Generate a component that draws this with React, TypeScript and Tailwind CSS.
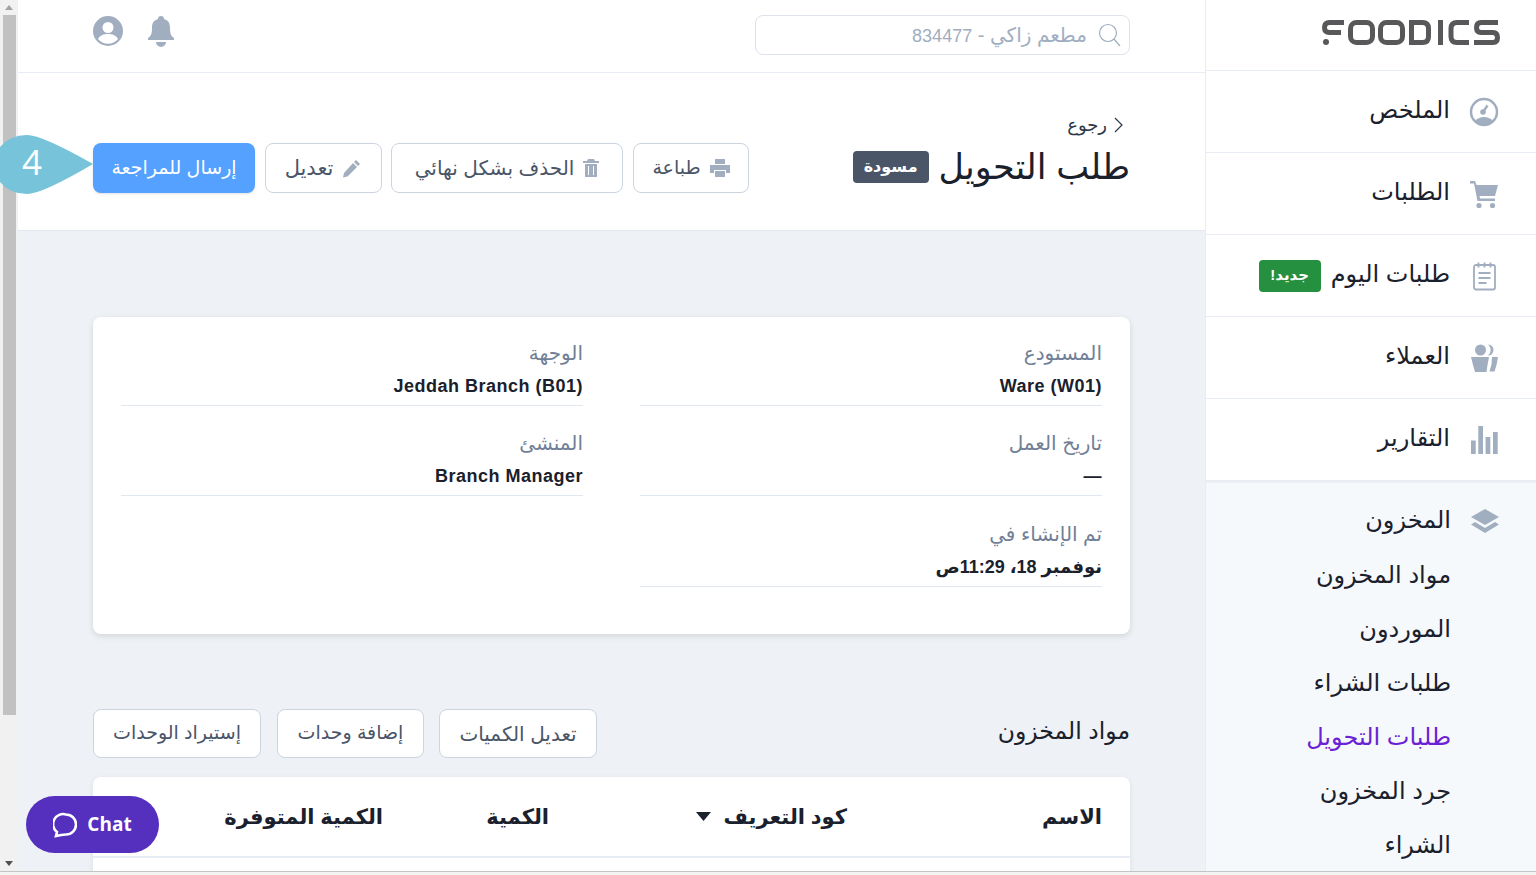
import React from 'react'

const Scrollbar = () => (
  <div className="w-[18px] h-full shrink-0 bg-[#f1f1f1] flex flex-col">
    <div className="h-[15px] w-full flex items-center justify-center">
      <svg width="8" height="5" viewBox="0 0 8 5"><path d="M4 0 8 5H0z" fill="#a3a3a3" /></svg>
    </div>
    <div className="w-[13px] h-[700px] self-start mr-[2px] bg-[#c1c1c1]" />
    <div className="flex-1" />
    <div className="h-[15px] w-full flex items-center justify-center mb-[4px]">
      <svg width="8" height="5" viewBox="0 0 8 5"><path d="M0 0h8L4 5z" fill="#505050" /></svg>
    </div>
  </div>
)

const iconCls = 'w-[30px] h-[30px] shrink-0 text-[#a0aec0]'

const GaugeIcon = () => (
  <svg viewBox="0 0 30 30" className={iconCls}>
    <circle cx="15" cy="15" r="13" fill="none" stroke="currentColor" strokeWidth="2.5" />
    <path d="M6 24a12 12 0 0 1 18 0 13 13 0 0 1-18 0z" fill="currentColor" />
    <circle cx="14" cy="15" r="2.8" fill="currentColor" />
    <path d="M14 15l4.5-6.500" stroke="currentColor" strokeWidth="2.400" />
  </svg>
)
const CartIcon = () => (
  <svg viewBox="0 0 30 30" className={iconCls}>
    <path d="M1 2h5l1.500 4H29l-3 11H10.500l.5 2.500h15V22H8.500L5 4.500H1z" fill="currentColor" />
    <circle cx="10" cy="26.500" r="2.600" fill="currentColor" />
    <circle cx="23.500" cy="26.500" r="2.600" fill="currentColor" />
  </svg>
)
const ClipboardIcon = () => (
  <svg viewBox="0 0 30 30" className={iconCls}>
    <rect x="5" y="4" width="21" height="24.500" rx="2" fill="none" stroke="currentColor" strokeWidth="1.800" />
    <path d="M9.500 1.500v5M15.500 1.500v5M21.500 1.500v5M9.500 12h12M9.500 17h12M9.500 22h8" stroke="currentColor" strokeWidth="1.800" fill="none" />
  </svg>
)
const PeopleIcon = () => (
  <svg viewBox="0 0 30 30" className={iconCls}>
    <circle cx="11.500" cy="7" r="5.500" fill="currentColor" />
    <path d="M19 1.500a5.500 5.500 0 0 1 0 11 7 7 0 0 0 0-11z" fill="currentColor" />
    <path d="M2 14h18l-1.500 8-1 7H6l-2-7z" fill="currentColor" />
    <path d="M23 14h6l-1.500 8-2 6.500H20.500l2-7z" fill="currentColor" />
  </svg>
)
const BarsIcon = () => (
  <svg viewBox="0 0 30 30" className={iconCls}>
    <path d="M2 15.600h4.700V29H2zM9.300 1H14v28H9.300zM16.600 12h4.700v17h-4.700zM24 7h4.700v22H24z" fill="currentColor" />
  </svg>
)
const LayersIcon = () => (
  <svg viewBox="0 0 30 30" className={iconCls}>
    <path d="M15 3l14 8-14 8-14-8z" fill="currentColor" />
    <path d="M5 16l10 6 10-6 4 2.500-14 8.500-14-8.500z" fill="currentColor" />
  </svg>
)

const Logo = () => (
  <svg width="178" height="26" viewBox="0 0 178 26" fill="none" stroke="#58585a" strokeWidth="5">
    {/* letter shapes of the brand mark */}
    <path d="M22 2.500H7.500Q2.500 2.500 2.500 7.500T7.500 12.500H19" />
    <circle cx="4" cy="22" r="3" fill="#58585a" stroke="none" />
    <rect x="28.500" y="2.500" width="22" height="20" rx="6" />
    <rect x="58.500" y="2.500" width="22" height="20" rx="6" />
    <path d="M89.500 2.500h11q6 0 6 6v8q0 6-6 6h-11z" />
    <path d="M118.500 0v25" />
    <path d="M147 2.500h-12q-6 0-6 6v8q0 6 6 6h12" />
    <path d="M176 2.500h-17q-4.500 0-4.500 5t4.500 5h12q4.500 0 4.500 5t-4.500 5h-19" />
  </svg>
)

const NavItem = ({ icon, label, badge }: { icon: React.ReactNode; label: string; badge?: boolean }) => (
  <div className="h-[82px] shrink-0 border-b border-[#e8ecf4] flex items-center pr-[37px] gap-[19px] text-[24px] text-[#1a202c]">
    {icon}
    <span className="-mt-[3px]">{label}</span>
    {badge && (
      <span className="-mr-[9px] bg-[#25903f] text-white text-[15px] font-bold rounded-[4px] h-[32px] w-[62px] flex items-center justify-center">
        جديد!
      </span>
    )}
  </div>
)

const Button = ({ children, className }: { children: React.ReactNode; className?: string }) => (
  <div className={`border border-[#cbd5e0] bg-white rounded-[8px] flex items-center justify-center gap-[9px] text-[#4a5568] ${className ?? ''}`}>
    {children}
  </div>
)

const PrinterIcon = () => (
  <svg width="20" height="20" viewBox="0 0 20 20" fill="#a0aec0">
    <path d="M5 1h10v5H5zM0 7h20v8h-4v-3H4v3H0zM5 13h10v6H5z" />
  </svg>
)
const TrashIcon = () => (
  <svg width="16" height="20" viewBox="0 0 16 20" fill="#a0aec0">
    <path d="M5 1h6l1 2h4v2H0V3h4zM2 6h12v13H2zM5 8v9h1V8zM10 8v9h1V8z" fillRule="evenodd" />
  </svg>
)
const PenIcon = () => (
  <svg width="20" height="20" viewBox="0 0 20 20" fill="#a0aec0">
    <path d="M14 2l4 4-2 2-4-4zM11 5l4 4-9.500 9.500L1 19.500l1-4.500z" />
  </svg>
)

const Field = ({ label, value, className }: { label: string; value: string; className?: string }) => (
  <div className={`border-b border-[#e2e8f0] pb-[6px] ${className ?? ''}`}>
    <div className="text-[20px] leading-[26px] text-[#718096]">{label}</div>
    <div className="text-[18px] leading-[26px] font-bold text-[#1a202c] mt-[7px]">{value}</div>
  </div>
)

export default function App() {
  return (
    <div dir="rtl" className="w-[1536px] h-[875px] overflow-hidden flex bg-[#eef1f5] font-['Liberation_Sans','DejaVu_Sans',sans-serif] tracking-[0.5px] relative">
      {/* sidebar */}
      <aside className="w-[331px] h-[871px] shrink-0 flex flex-col bg-white border-l border-[#e8ecf4] overflow-hidden">
        <div className="h-[71px] shrink-0 border-b border-[#e8ecf4] flex items-center pr-[36px] pb-[4px]">
          <Logo />
        </div>
        <NavItem icon={<GaugeIcon />} label="الملخص" />
        <NavItem icon={<CartIcon />} label="الطلبات" />
        <NavItem icon={<ClipboardIcon />} label="طلبات اليوم" badge />
        <NavItem icon={<PeopleIcon />} label="العملاء" />
        <NavItem icon={<BarsIcon />} label="التقارير" />
        <div className="flex-1 bg-[#f6f9fc] shadow-[inset_0_3px_3px_-2px_rgba(0,0,0,0.08)] pr-[36px] text-[24px] text-[#1a202c]">
          <div className="flex items-center gap-[19px] h-[80px]">
            <LayersIcon />
            <span className="-mt-[3px]">المخزون</span>
          </div>
          <div className="-mt-[13px] flex flex-col">
            <div className="h-[54px] flex items-center pr-[49px]">مواد المخزون</div>
            <div className="h-[54px] flex items-center pr-[49px]">الموردون</div>
            <div className="h-[54px] flex items-center pr-[49px]">طلبات الشراء</div>
            <div className="h-[54px] flex items-center pr-[49px] text-[#6b21d6]">طلبات التحويل</div>
            <div className="h-[54px] flex items-center pr-[49px]">جرد المخزون</div>
            <div className="h-[54px] flex items-center pr-[49px]">الشراء</div>
          </div>
        </div>
      </aside>

      {/* main */}
      <main className="flex-1 h-[871px] overflow-hidden flex flex-col">
        <header className="h-[73px] shrink-0 bg-white border-b border-[#e8ecf4] flex items-center justify-between px-[75px] pb-[4px]">
          <div className="w-[375px] h-[40px] mt-[1px] border border-[#dde2ec] rounded-[8px] flex items-center pr-[8px] gap-[10px] text-[20px] text-[#a0aec0]">
            <svg width="24" height="24" viewBox="0 0 24 24" fill="none" stroke="#a0aec0" strokeWidth="1.200">
              <circle cx="11" cy="10" r="8.500" />
              <path d="M17 16l6 7" />
            </svg>
            <span>مطعم زاكي - <span className="text-[18px]">834477</span></span>
          </div>
          <div className="flex items-center gap-[24px] -mt-[6px]">
            <svg width="28" height="32" viewBox="0 0 28 32" fill="#a0aec0">
              <path d="M14 1a3 3 0 0 1 3 3c5 1.500 6 5 6 9 0 6 1 8 4 10v2H1v-2c3-2 4-4 4-10 0-4 1-7.500 6-9a3 3 0 0 1 3-3zM9 27h10a5 5 0 0 1-10 0z" />
            </svg>
            <svg width="30" height="30" viewBox="0 0 30 30">
              <circle cx="15" cy="15" r="15" fill="#a0aec0" />
              <circle cx="15" cy="11.500" r="5.500" fill="#fff" />
              <path d="M5 23c2-4 6-5 10-5s8 1 10 5a13 13 0 0 1-20 0z" fill="#fff" />
            </svg>
          </div>
        </header>

        <section className="h-[158px] shrink-0 bg-white border-b border-[#e2e8f0] flex items-start justify-between px-[75px] pt-[40px]">
          <div>
            <div className="flex items-center gap-[7px] text-[18px] leading-[24px] text-[#2d3748] pr-[6px]">
              <svg width="10" height="16" viewBox="0 0 10 16" fill="none" stroke="#2d3748" strokeWidth="1.200">
                <path d="M1 1l7 7-7 7" />
              </svg>
              <span>رجوع</span>
            </div>
            <div className="flex items-center gap-[10px] mt-[6px]">
              <h1 className="text-[35px] leading-[48px] text-[#1a202c]">طلب التحويل</h1>
              <span className="bg-[#4a5568] text-white text-[16px] font-bold rounded-[4px] w-[76px] h-[32px] flex items-center justify-center">مسودة</span>
            </div>
          </div>
          <div className="flex items-center mt-[30px]">
            <Button className="w-[116px] h-[50px] text-[19px]"><PrinterIcon />طباعة</Button>
            <Button className="w-[232px] h-[50px] mr-[10px] text-[20px]"><TrashIcon />الحذف بشكل نهائي</Button>
            <Button className="w-[117px] h-[50px] mr-[9px] text-[21px]"><PenIcon />تعديل</Button>
            <div className="w-[162px] h-[50px] mr-[10px] rounded-[8px] bg-[#55a1ff] text-white text-[19px] flex items-center justify-center shadow-sm">إرسال للمراجعة</div>
          </div>
        </section>

        <div className="flex-1 px-[75px] pt-[86px]">
          <div className="h-[317px] bg-white rounded-[8px] shadow-[0_2px_6px_rgba(0,0,0,0.12)] px-[28px] pt-[23px] grid grid-cols-2 gap-x-[57px] content-start">
            <Field label="المستودع" value="Ware (W01)" />
            <Field label="الوجهة" value="Jeddah Branch (B01)" />
            <Field label="تاريخ العمل" value="—" className="mt-[24px]" />
            <Field label="المنشئ" value="Branch Manager" className="mt-[24px]" />
            <Field label="تم الإنشاء في" value="نوفمبر 18، 11:29ص" className="mt-[25px]" />
          </div>

          <div className="flex items-center justify-between mt-[75px]">
            <h2 className="text-[23.500px] text-[#1a202c] -mt-[4px]">مواد المخزون</h2>
            <div className="flex">
              <Button className="w-[158px] h-[49px] text-[20px]">تعديل الكميات</Button>
              <Button className="w-[147px] h-[49px] mr-[15px] text-[19px]">إضافة وحدات</Button>
              <Button className="w-[168px] h-[49px] mr-[16px] text-[19px]">إستيراد الوحدات</Button>
            </div>
          </div>

          <div className="mt-[19px] h-[200px] bg-white rounded-t-[8px] shadow-[0_2px_6px_rgba(0,0,0,0.08)]">
            <div className="h-[81px] border-b-2 border-[#e8ecf4] grid grid-cols-[255px_298px_166px_1fr] items-center pr-[28px] text-[21px] font-bold text-[#1a202c]">
              <div>الاسم</div>
              <div className="flex items-center gap-[13px]">
                كود التعريف
                <svg width="15" height="9" viewBox="0 0 15 9"><path d="M0 0h15L7.500 9z" fill="#1a202c" /></svg>
              </div>
              <div>الكمية</div>
              <div>الكمية المتوفرة</div>
            </div>
          </div>
        </div>
      </main>

      <Scrollbar />

      {/* bottom edge of the window */}
      <div className="absolute bottom-0 left-0 right-0 h-[4px] bg-[#f3f3f3] border-t border-[#c4c4c4]" />

      {/* tour marker */}
      <svg className="absolute left-0 top-[135px]" width="94" height="60" viewBox="0 0 94 60">
        <path d="M0 12Q10 0 27 0 42 0 93 29 42 59 27 59 10 59 0 47z" fill="#76c3da" />
      </svg>
      <span dir="ltr" className="absolute left-[22px] top-[141px] text-[35px] leading-[42px] tracking-normal text-white font-['Open_Sans',sans-serif]">4</span>

      {/* chat button */}
      <div dir="ltr" className="absolute left-[26px] top-[796px] w-[133px] h-[57px] rounded-full bg-[#5530bf] flex items-center justify-center gap-[10px] text-white text-[19px] tracking-normal font-bold font-['Open_Sans',sans-serif]">
        <svg width="24" height="26" viewBox="0 0 24 26" fill="none" stroke="#fff" strokeWidth="2.600">
          <path d="M13 2.500a10 10 0 0 1 0 20q-2 0-5 .5l-5 1 1-4a10 10 0 0 1 9-17.500z" />
        </svg>
        Chat
      </div>
    </div>
  )
}
